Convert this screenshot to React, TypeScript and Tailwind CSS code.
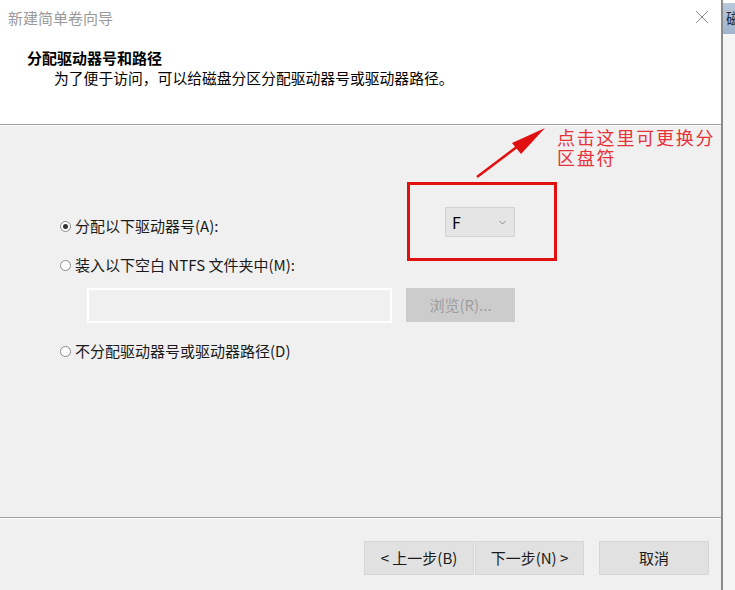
import React from "react";

const ui = { fontFamily: '"Noto Sans CJK SC", "Noto Sans", sans-serif' };
const serif = { fontFamily: '"Noto Sans CJK SC", "Liberation Serif", serif' };

function Radio({ checked }: { checked?: boolean }) {
  return (
    <span className="w-[11px] h-[11px] rounded-full border border-[#8a8a8a] bg-white flex items-center justify-center shrink-0">
      {checked && <span className="w-[5px] h-[5px] rounded-full bg-[#333]" />}
    </span>
  );
}

function Button({ children, className = "" }: { children: React.ReactNode; className?: string }) {
  return (
    <div
      className={`h-[34px] flex items-center justify-center bg-[#e1e1e1] border border-[#d6d6d6] text-[15px] text-[#1a1a1a] ${className}`}
    >
      {children}
    </div>
  );
}

export default function App() {
  return (
    <div className="w-[735px] h-[590px] flex overflow-hidden bg-white" style={ui}>
      {/* wizard window */}
      <div className="w-[723px] shrink-0 h-full flex flex-col border-r-2 border-[#8c8c8c]">
        {/* title bar */}
        <div className="h-[35px] bg-white flex items-center justify-between pl-[8px] pr-[12px] shrink-0">
          <span className="text-[15px] text-[#9a9a9a] leading-none">新建简单卷向导</span>
          <svg width="14" height="14" viewBox="0 0 14 14" className="mt-[-2px]">
            <path d="M1 1L13 13M13 1L1 13" stroke="#8a8a8a" strokeWidth="1" />
          </svg>
        </div>

        {/* page header */}
        <div className="h-[89px] bg-white shrink-0 pt-[13px]">
          <div className="pl-[27px] text-[15px] font-bold text-black leading-[20px]">分配驱动器号和路径</div>
          <div className="pl-[54px] text-[14.8px] text-black leading-[20px]">
            为了便于访问，可以给磁盘分区分配驱动器号或驱动器路径。
          </div>
        </div>
        <div className="h-px bg-[#a0a0a0] shrink-0" />
        <div className="h-px bg-white shrink-0" />

        {/* page body */}
        <div className="flex-1 bg-[#f0f0f0] relative">
          <div className="pl-[60px] pt-[81px] text-[15px] text-[#1a1a1a]">
            <div className="flex items-start h-[30px]">
              <div className="flex items-center gap-[4px] pt-[9px] leading-[20px] w-[385px]">
                <Radio checked />
                <span>分配以下驱动器号(A):</span>
              </div>
              <div className="w-[70px] h-[30px] bg-[#e5e5e5] border border-[#d3d3d3] flex items-center justify-between pl-[6px] pr-[8px]">
                <span className="text-[16px] text-black">F</span>
                <svg width="7" height="5" viewBox="0 0 7 5">
                  <path d="M0.5 1L3.5 4L6.5 1" fill="none" stroke="#8a8a8a" strokeWidth="1" />
                </svg>
              </div>
            </div>

            <div className="flex items-center gap-[4px] mt-[18px] leading-[20px]">
              <Radio />
              <span>装入以下空白 NTFS 文件夹中(M):</span>
            </div>

            <div className="flex items-start mt-[13px] pl-[27px]">
              <div className="w-[305px] h-[35px] border-2 border-white bg-[#f0f0f0]" />
              <div className="ml-[14px] w-[109px] h-[34px] bg-[#cccccc] flex items-center justify-center text-[15px] text-[#9d9d9d]">
                浏览(R)...
              </div>
            </div>

            <div className="flex items-center gap-[4px] mt-[18px] leading-[20px]">
              <Radio />
              <span>不分配驱动器号或驱动器路径(D)</span>
            </div>
          </div>

          {/* annotation: highlight box */}
          <div className="absolute left-[407px] top-[56px] w-[150px] h-[79px] border-[3px] border-[#e01010]" />

          {/* annotation: arrow */}
          <svg className="absolute left-0 top-0" width="723" height="100" viewBox="0 0 723 100">
            <line x1="477" y1="51" x2="522" y2="17" stroke="#e01010" strokeWidth="2.5" />
            <polygon points="545,2 512,17 521,28" fill="#e01010" />
          </svg>

          {/* annotation: note */}
          <div
            className="absolute left-[557px] top-[1px] text-[18px] leading-[20px] tracking-[1.8px] text-[#e8323a] w-[165px]"
            style={serif}
          >
            <div>点击这里可更换分</div>
            <div>区盘符</div>
          </div>
        </div>

        {/* footer */}
        <div className="h-px bg-[#a0a0a0] shrink-0" />
        <div className="h-px bg-white shrink-0" />
        <div className="h-[71px] bg-[#f0f0f0] shrink-0 flex items-start pt-[22px] pl-[364px]">
          <Button className="w-[110px]">&lt; 上一步(B)</Button>
          <Button className="w-[109px] ml-px">下一步(N) &gt;</Button>
          <Button className="w-[110px] ml-[15px]">取消</Button>
        </div>
      </div>

      {/* neighbouring window edge */}
      <div className="w-[12px] shrink-0 h-full bg-[#f7f7f7] flex flex-col overflow-hidden">
        <div className="h-[3px] bg-white" />
        <div className="h-[31px] bg-gradient-to-b from-[#b9c9dc] to-[#9fb4cc] overflow-hidden pl-[3px] flex items-center">
          <span className="text-[15px] text-[#1a2a3a] whitespace-nowrap">磁</span>
        </div>
        <div className="flex-1 bg-[#f5f5f5]" />
      </div>
    </div>
  );
}
